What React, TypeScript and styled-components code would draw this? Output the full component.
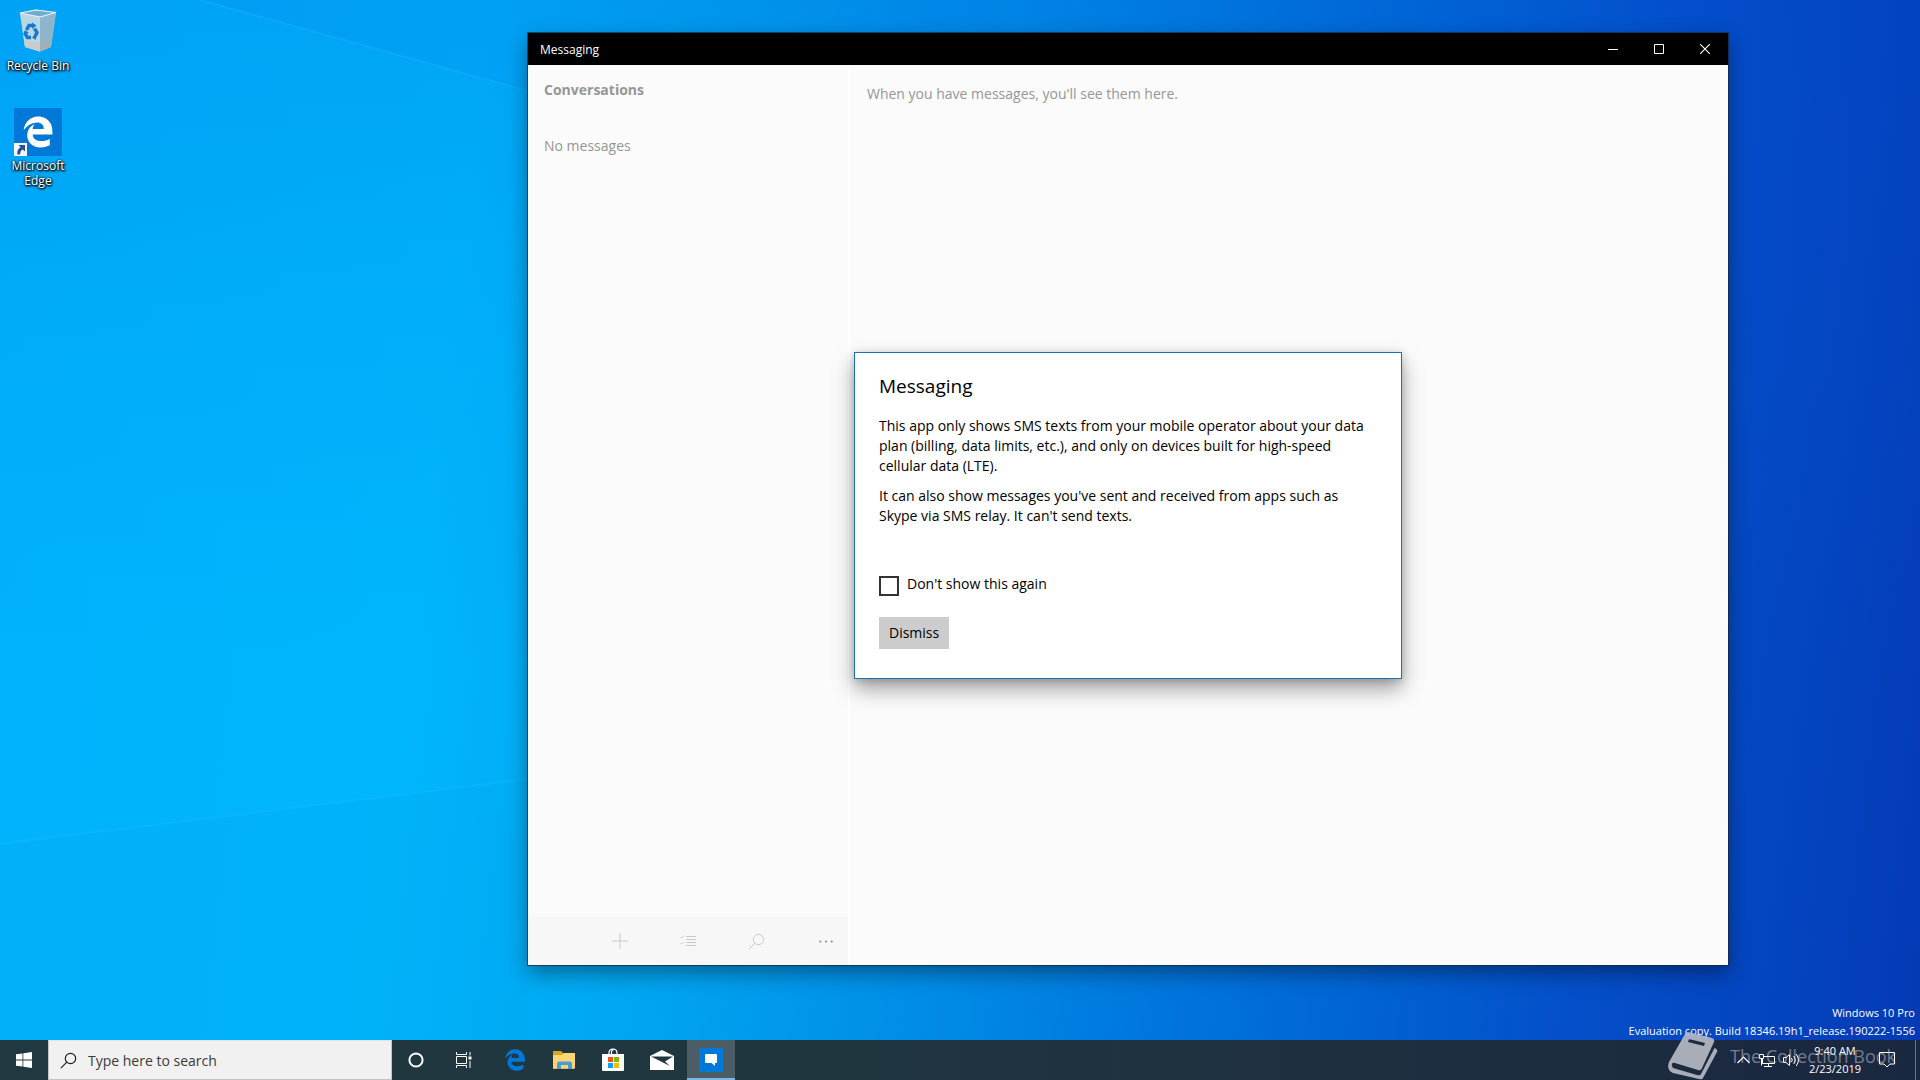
import React, { useState } from "react";
import styled, { createGlobalStyle } from "styled-components";
import { FaEdgeLegacy } from "react-icons/fa6";

const GlobalStyle = createGlobalStyle`
  *, *::before, *::after { box-sizing: border-box; }
  body { margin: 0; font-family: "Open Sans", "Noto Sans", sans-serif; }
  button, input { font: inherit; color: inherit; }
  button { border: 0; padding: 0; background: none; cursor: pointer; }
  h1, h2, p { margin: 0; }
`;

const Screen = styled.div`
  position: relative;
  display: flex;
  flex-direction: column;
  min-height: 100vh;
  overflow: hidden;
  background:
    linear-gradient(180deg, rgba(0, 70, 210, 0.15) 0%, rgba(0, 90, 220, 0.06) 35%, rgba(0, 180, 255, 0) 62%),
    linear-gradient(97deg, #00b2fc 0%, #00b6fc 24%, #00a4f0 38%, #008ae6 52%, #0068d6 70%, #0450ca 82%, #0444c0 92%, #043ab4 100%);
`;

const Wallpaper = styled.svg`
  position: absolute;
  inset: 0;
  width: 100%;
  height: 100%;
`;

const Desktop = styled.main`
  position: relative;
  flex: 1;
  display: flex;
  justify-content: space-between;
`;

const Shortcuts = styled.nav`
  display: flex;
  flex-direction: column;
  gap: 35px;
  width: 76px;
  padding-top: 8px;
`;

const Shortcut = styled.button`
  display: flex;
  flex-direction: column;
  align-items: center;
  gap: 2px;
  color: #fff;
  font-size: 12px;
  line-height: 15px;
  text-shadow: 1px 1px 2px #000, 0 0 2px #000, 0 1px 3px #000;
`;

const EdgeTile = styled.span`
  position: relative;
  display: grid;
  place-items: center;
  width: 48px;
  height: 48px;
  background: #0078d7;
  color: #fff;
  font-size: 32px;
`;

const ShortcutArrow = styled.svg`
  position: absolute;
  left: 0;
  bottom: 0;
`;

const Edition = styled.div`
  align-self: flex-end;
  padding: 0 5px 0 0;
  color: #fff;
  font-size: 11px;
  line-height: 18px;
  text-align: right;
`;

const Window = styled.section`
  position: absolute;
  top: 33px;
  right: 10%;
  bottom: 75px;
  left: 27.5%;
  display: flex;
  flex-direction: column;
  background: #fbfbfb;
  outline: 1px solid rgba(20, 40, 50, 0.7);
  box-shadow: 0 8px 20px rgba(0, 0, 0, 0.4);
`;

const TitleBar = styled.header`
  display: flex;
  justify-content: space-between;
  align-items: center;
  height: 32px;
  padding-left: 12px;
  background: #000;
  color: #fff;
`;

const WindowTitle = styled.h1`
  font-size: 12px;
  font-weight: 400;
`;

const WindowControls = styled.div`
  display: flex;
`;

const WindowControl = styled.button`
  display: grid;
  place-items: center;
  width: 46px;
  height: 32px;
`;

const Panes = styled.div`
  flex: 1;
  display: flex;
  color: #969696;
  font-size: 14px;
  line-height: 20px;
`;

const Sidebar = styled.aside`
  display: flex;
  flex-direction: column;
  width: 320px;
`;

const Conversations = styled.div`
  flex: 1;
  display: flex;
  flex-direction: column;
  gap: 36px;
  padding: 15px 16px;
`;

const PaneHeading = styled.h2`
  font-size: 14px;
  font-weight: 700;
`;

const CommandBar = styled.div`
  display: flex;
  justify-content: flex-end;
  height: 48px;
  background: #f7f7f7;
`;

const Command = styled.button<{ $more?: boolean }>`
  display: grid;
  place-items: center;
  width: ${(p) => (p.$more ? 44 : 68)}px;
  margin-left: ${(p) => (p.$more ? 14 : 0)}px;
  color: ${(p) => (p.$more ? "#8c8c8c" : "#cacaca")};
`;

const Thread = styled.div`
  flex: 1;
  padding: 19px 17px;
  border-left: 2px solid #fff;
`;

const DialogLayer = styled.div`
  position: absolute;
  inset: 32px 0 0;
  display: grid;
  place-items: center;
`;

const Dialog = styled.div`
  display: flex;
  flex-direction: column;
  align-items: flex-start;
  width: 548px;
  max-width: 100%;
  padding: 19px 24px 29px;
  border: 1px solid #1a6fb5;
  background: #fff;
  color: #000;
  font-size: 14px;
  line-height: 20px;
  box-shadow: 0 10px 20px rgba(0, 0, 0, 0.36), 0 2px 8px rgba(0, 0, 0, 0.16);
`;

const DialogTitle = styled.h2`
  font-size: 19px;
  font-weight: 400;
  line-height: 28px;
`;

const DialogText = styled.div`
  display: flex;
  flex-direction: column;
  gap: 10px;
  padding: 16px 0 44px;
`;

const CheckRow = styled.label`
  display: flex;
  align-items: flex-start;
  gap: 8px;
  padding-bottom: 21px;
`;

const CheckBox = styled.input`
  appearance: none;
  width: 20px;
  height: 20px;
  margin: 6px 0 0;
  border: 2px solid #333;
  background: #fff;
  &:checked { background: #0078d7; box-shadow: inset 0 0 0 2px #fff; }
`;

const CheckText = styled.span`
  padding-top: 4px;
`;

const DismissButton = styled.button`
  height: 32px;
  padding: 0 10px;
  background: #ccc;
`;

const Taskbar = styled.footer`
  position: relative;
  display: flex;
  justify-content: space-between;
  height: 40px;
  background: linear-gradient(90deg, #203840 0%, #20363f 45%, #1e2e40 75%, #1a2740 100%);
  color: #fff;
`;

const TaskGroup = styled.div`
  display: flex;
`;

const TaskButton = styled.button<{ $active?: boolean }>`
  display: grid;
  place-items: center;
  width: 48px;
  height: 40px;
  border-bottom: 2px solid ${(p) => (p.$active ? "#76b9ed" : "transparent")};
  border-top: 2px solid ${(p) => (p.$active ? "#4c5d65" : "transparent")};
  background: ${(p) => (p.$active ? "#4c5d65" : "transparent")};
`;

const SearchBox = styled.label`
  display: flex;
  align-items: center;
  gap: 11px;
  width: 344px;
  padding-left: 11px;
  border: 1px solid #c4c4c4;
  border-top-color: #e4e4e4;
  background: #f1f1f1;
  color: #222;
`;

const SearchInput = styled.input`
  flex: 1;
  min-width: 0;
  padding: 0;
  border: 0;
  outline: 0;
  background: transparent;
  font-size: 14px;
  &::placeholder { color: #3a3a3a; opacity: 1; }
`;

const PinnedApps = styled.div`
  display: flex;
  gap: 1px;
  padding-left: 3px;
`;

const EdgeGlyph = styled.span`
  display: grid;
  color: #0078d7;
  font-size: 22px;
`;

const TrayButton = styled.button`
  display: grid;
  place-items: center;
  width: 24px;
  height: 40px;
`;

const Clock = styled.button`
  width: 64px;
  font-size: 11px;
  line-height: 18px;
  white-space: nowrap;
`;

const ActionCenter = styled.button`
  display: grid;
  place-items: center;
  width: 40px;
  margin-right: 8px;
`;

const ShowDesktop = styled.button`
  width: 5px;
  border-left: 1px solid #6d7686;
`;

const Watermark = styled.div`
  position: absolute;
  right: 24px;
  bottom: 0;
  display: flex;
  align-items: center;
  gap: 12px;
  color: rgba(205, 210, 220, 0.5);
  font-size: 18px;
  line-height: 24px;
  pointer-events: none;
`;

const RecycleBinIcon = () => (
  <svg width="48" height="48" viewBox="0 0 48 48" aria-hidden="true">
    <path d="M6 5 22 1.500 42 4.500 37 39 26 43.500 11 39Z" fill="#a6cde2" />
    <path d="M6 5 26 9 42 4.500 22 2Z" fill="#6fadcf" />
    <path d="M6 5 26 9V43.500L11 39Z" fill="#b9d6e4" />
    <path d="M26 9 42 4.500 37 39 26 43.500Z" fill="#8eb6cb" />
    <path d="m10 32 16 3v8.500L11 39Z" fill="#c7ccce" />
    <path d="m26 35 11-4-1 8-10 4.500Z" fill="#a3afb5" />
    <path d="M6 5 22 2 42 4.500 26 9Z" fill="none" stroke="#e3f3fa" strokeWidth="1.200" />
    <g fill="none" stroke="#1878c8" strokeWidth="3.400">
      <path d="m12.500 22 2.500-4.500h4" />
      <path d="m20.500 20.500 2.500 4-2 4" />
      <path d="M17 29.500h-3.500L11 25.500" />
    </g>
    <path d="m18 14.500 4.500 3-4.500 3.500ZM22 26l-4 3.500 4 2.500ZM9 26.500l2-4.500 4 3Z" fill="#1878c8" />
  </svg>
);

const SearchGlyph = ({ size, strokeWidth }: { size: number; strokeWidth: number }) => (
  <svg width={size} height={size} viewBox="0 0 17 17" fill="none" stroke="currentColor" strokeWidth={strokeWidth} aria-hidden="true">
    <circle cx="10.500" cy="6.500" r="5.200" />
    <path d="m6.800 10.200-6 6" />
  </svg>
);

const App = () => {
  const [open, setOpen] = useState(true);
  return (
    <Screen>
      <GlobalStyle />
      <Wallpaper viewBox="0 0 1920 1080" preserveAspectRatio="none" aria-hidden="true">
        <path d="M200 0 528 91 1000 230V0Z" fill="#0078e8" fillOpacity="0.100" />
        <path d="m200 0 328 91" stroke="#38b6ff" strokeOpacity="0.250" strokeWidth="2" />
        <path d="M0 844 528 779V1080H0Z" fill="#00a8ee" fillOpacity="0.180" />
        <path d="m0 844 528-65" stroke="#30c4ff" strokeOpacity="0.200" strokeWidth="2" />
      </Wallpaper>

      <Desktop>
        <Shortcuts aria-label="Desktop shortcuts">
          <Shortcut>
            <RecycleBinIcon />
            Recycle Bin
          </Shortcut>
          <Shortcut>
            <EdgeTile>
              <FaEdgeLegacy aria-hidden="true" />
              <ShortcutArrow width="13" height="13" viewBox="0 0 13 13" aria-hidden="true">
                <path d="M0 0h13v13H0Z" fill="#f4f6f8" />
                <path d="M4.500 2H11v6.500L8.800 6.400C6.800 7.400 6 9 6.200 11.500H3.400C2.800 8.400 4 5.600 6.600 4.200Z" fill="#2b4f8e" />
              </ShortcutArrow>
            </EdgeTile>
            <span>Microsoft<br />Edge</span>
          </Shortcut>
        </Shortcuts>
        <Edition>
          <p>Windows 10 Pro</p>
          <p>Evaluation copy. Build 18346.19h1_release.190222-1556</p>
        </Edition>

        <Window aria-label="Messaging">
          <TitleBar>
            <WindowTitle>Messaging</WindowTitle>
            <WindowControls>
              <WindowControl aria-label="Minimize">
                <svg width="10" height="10" viewBox="0 0 10 10"><path d="M0 5.500h10" stroke="#fff" /></svg>
              </WindowControl>
              <WindowControl aria-label="Maximize">
                <svg width="10" height="10" viewBox="0 0 10 10"><path d="M.5.5h9v9h-9Z" fill="none" stroke="#fff" /></svg>
              </WindowControl>
              <WindowControl aria-label="Close">
                <svg width="10" height="10" viewBox="0 0 10 10"><path d="m0 0 10 10M10 0 0 10" stroke="#fff" strokeWidth="1.100" /></svg>
              </WindowControl>
            </WindowControls>
          </TitleBar>
          <Panes>
            <Sidebar>
              <Conversations>
                <PaneHeading>Conversations</PaneHeading>
                <p>No messages</p>
              </Conversations>
              <CommandBar>
                <Command aria-label="New message">
                  <svg width="16" height="16" viewBox="0 0 16 16"><path d="M8 0v16M0 8h16" stroke="currentColor" /></svg>
                </Command>
                <Command aria-label="Select">
                  <svg width="16" height="12" viewBox="0 0 16 12" fill="none" stroke="currentColor">
                    <path d="M6 1.500h10M6 4.500h10M6 7.500h10M6 10.500h10M.5 2l1 1 2.500-2.500M.5 8l1 1L4 6.500" />
                  </svg>
                </Command>
                <Command aria-label="Search messages">
                  <SearchGlyph size={17} strokeWidth={1} />
                </Command>
                <Command $more aria-label="More">
                  <svg width="14" height="3" viewBox="0 0 14 3" fill="currentColor">
                    <circle cx="1.300" cy="1.500" r="1.100" /><circle cx="7" cy="1.500" r="1.100" /><circle cx="12.700" cy="1.500" r="1.100" />
                  </svg>
                </Command>
              </CommandBar>
            </Sidebar>
            <Thread>When you have messages, you'll see them here.</Thread>
          </Panes>
          {open && (
            <DialogLayer>
              <Dialog role="dialog" aria-labelledby="dialog-title">
                <DialogTitle id="dialog-title">Messaging</DialogTitle>
                <DialogText>
                  <p>
                    This app only shows SMS texts from your mobile operator about your data plan (billing, data limits,
                    etc.), and only on devices built for high-speed cellular data (LTE).
                  </p>
                  <p>
                    It can also show messages you've sent and received from apps such as Skype via SMS relay. It can't
                    send texts.
                  </p>
                </DialogText>
                <CheckRow>
                  <CheckBox type="checkbox" />
                  <CheckText>Don't show this again</CheckText>
                </CheckRow>
                <DismissButton onClick={() => setOpen(false)}>Dismiss</DismissButton>
              </Dialog>
            </DialogLayer>
          )}
        </Window>
      </Desktop>

      <Taskbar>
        <TaskGroup>
          <TaskButton aria-label="Start">
            <svg width="16" height="16" viewBox="0 0 16 16" fill="#fff"><path d="M0 2.300 6.500 1.400v6.100H0ZM7.300 1.300 16 0v7.500H7.300ZM0 8.400h6.500v6.200L0 13.700ZM7.300 8.400H16V16l-8.700-1.300Z" /></svg>
          </TaskButton>
          <SearchBox>
            <SearchGlyph size={17} strokeWidth={1.2} />
            <SearchInput type="text" aria-label="Search" placeholder="Type here to search" />
          </SearchBox>
          <TaskButton aria-label="Cortana">
            <svg width="16" height="16" viewBox="0 0 16 16"><circle cx="8" cy="8" r="6.600" fill="none" stroke="#fff" strokeWidth="2" /></svg>
          </TaskButton>
          <TaskButton aria-label="Task View">
            <svg width="16" height="16" viewBox="0 0 16 16" fill="none" stroke="#fff">
              <path d="M.5 0v2.500h10V0M.5 4.500h10v7H.5ZM.5 16v-2.500h10V16M14 0v3.500M14 9v7" />
              <path d="M12.500 4.500h3v3h-3Z" fill="#fff" stroke="none" />
            </svg>
          </TaskButton>
          <PinnedApps>
            <TaskButton aria-label="Microsoft Edge">
              <EdgeGlyph><FaEdgeLegacy /></EdgeGlyph>
            </TaskButton>
            <TaskButton aria-label="File Explorer">
              <svg width="22" height="18" viewBox="0 0 22 18">
                <path d="M0 0h8l2 2h11v16H0Z" fill="#dba520" />
                <path d="M0 4h9l2-2h11v15.500H0Z" fill="#fcd672" />
                <path d="M4 18v-6l1.500-1.500h12L19 12v6h-4v-4H8v4Z" fill="#4a9cd6" />
              </svg>
            </TaskButton>
            <TaskButton aria-label="Microsoft Store">
              <svg width="24" height="24" viewBox="0 0 24 24">
                <path d="M8 7V5q0-4 4-4t4 4v2M10.500 7V4q0-2.500 2.500-2.500" fill="none" stroke="#fff" strokeWidth="1.200" />
                <path d="M1 6h22v16q0 1-1 1H2q-1 0-1-1Z" fill="#fff" />
                <path d="M7 9h5v5H7Z" fill="#f25022" /><path d="M13 9h5v5h-5Z" fill="#7fba00" />
                <path d="M7 15h5v5H7Z" fill="#00a4ef" /><path d="M13 15h5v5h-5Z" fill="#ffb900" />
              </svg>
            </TaskButton>
            <TaskButton aria-label="Mail">
              <svg width="24" height="20" viewBox="0 0 24 20">
                <path d="M0 6 12 0l12 6v14H0Z" fill="#fff" />
                <path d="M1 6.500h22L15 11.500l5 4.500Z" fill="#20363f" />
              </svg>
            </TaskButton>
            <TaskButton $active aria-label="Messaging">
              <svg width="24" height="24" viewBox="0 0 24 24">
                <path d="M0 0h24v24H0Z" fill="#0078d7" />
                <path d="M7 6h10q1 0 1 1v7q0 1-1 1h-1v3l-3.500-3H7q-1 0-1-1V7q0-1 1-1Z" fill="#fff" />
              </svg>
            </TaskButton>
          </PinnedApps>
        </TaskGroup>
        <TaskGroup>
          <TrayButton aria-label="Show hidden icons">
            <svg width="13" height="8" viewBox="0 0 13 8"><path d="m.5 7 6-6 6 6" fill="none" stroke="#fff" strokeWidth="1.200" /></svg>
          </TrayButton>
          <TrayButton aria-label="Network">
            <svg width="16" height="14" viewBox="0 0 16 14" fill="none" stroke="#fff">
              <path d="M5 3.500h10.500v7H3.500V6M.5 1.500h4v4h-4ZM2.500 5.500v7M9.500 10.500v3M5 13.500h8" />
            </svg>
          </TrayButton>
          <TrayButton aria-label="Volume">
            <svg width="17" height="14" viewBox="0 0 17 14" fill="none" stroke="#fff">
              <path d="M.5 4.500H3L6.500 1.500v11L3 9.500H.5ZM8.500 5q1.500 2 0 4M10.800 3q3 4 0 8M13.200 1q4.500 6 0 12" />
            </svg>
          </TrayButton>
          <Clock>9:40 AM<br />2/23/2019</Clock>
          <ActionCenter aria-label="Notifications">
            <svg width="16" height="16" viewBox="0 0 16 16"><path d="M.5.500h15v11.500H11L8 15l-3-3H.5Z" fill="none" stroke="#fff" /></svg>
          </ActionCenter>
          <ShowDesktop aria-label="Show desktop" />
        </TaskGroup>
      </Taskbar>

      <Watermark>
        <svg width="50" height="48" viewBox="0 0 50 48" aria-hidden="true">
          <path fill="#b4b8c2" fillOpacity=".92" fillRule="evenodd" d="M17 2q1-2 3-2l24 6q3 1 2 4L34 36q-1 3-4 2L7 31q-4-1-3 3l1 2 24 7q3 1 4-1L46 17q1-2 2 0 2 1 1 3L35 46q-1 2-4 1L5 41Q-2 38 1 30ZM21 7l-1 3 16 4 1-3Z" />
        </svg>
        <span>The Collection Book</span>
      </Watermark>
    </Screen>
  );
};

export default App;
